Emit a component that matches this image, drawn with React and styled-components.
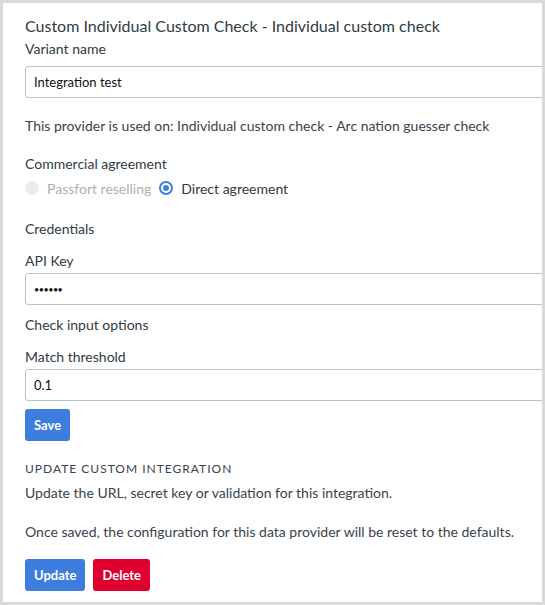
import React from "react";
import styled, { createGlobalStyle } from "styled-components";

const GlobalStyle = createGlobalStyle`
  html, body {
    margin: 0;
    padding: 0;
    background: #d9d9d9;
  }
  * {
    box-sizing: border-box;
  }
`;

const Frame = styled.div`
  width: 545px;
  height: 605px;
  padding: 3px;
  background: #d9d9d9;
`;

const Card = styled.div`
  width: 539px;
  height: 599px;
  background: #fff;
  overflow: hidden;
  padding: 13px 0 0 22px;
  font-family: Lato, "Liberation Sans", sans-serif;
  color: #38434d;
`;

const Title = styled.h1`
  margin: 0;
  font-size: 16px;
  line-height: 20px;
  font-weight: 400;
  color: #2f3b45;
`;

const Label = styled.div`
  margin-top: ${({ gap }) => gap}px;
  font-size: 14px;
  line-height: 20px;
  font-weight: 400;
  color: #2f3b45;
`;

const Input = styled.input`
  display: block;
  width: 580px;
  height: 32px;
  margin-top: ${({ gap }) => gap}px;
  padding: 0 8px;
  border: 1px solid #b7c2ca;
  border-radius: 3px;
  font-family: Lato, "Liberation Sans", sans-serif;
  font-size: ${({ masked }) => (masked ? "9px" : "13px")};
  letter-spacing: ${({ masked }) => (masked ? "-0.5px" : "0")};
  color: #111;
  background: #fff;
  outline: none;
`;

const Text = styled.p`
  margin: ${({ gap }) => gap}px 0 0;
  font-size: 14px;
  line-height: 20px;
  color: #38434d;
`;

const RadioRow = styled.div`
  display: flex;
  align-items: center;
  height: 20px;
  margin-top: 4px;
  font-size: 14px;
`;

const RadioOption = styled.label`
  display: flex;
  align-items: center;
  gap: 8px;
  margin-right: 8px;
  color: ${({ disabled }) => (disabled ? "#a9b0b6" : "#2f3b45")};
`;

const RadioDot = styled.span`
  width: 14px;
  height: 14px;
  border-radius: 50%;
  flex-shrink: 0;
  background: ${({ checked }) => (checked ? "#fff" : "#e9eef3")};
  border: ${({ checked }) => (checked ? "2px solid #3d7fde" : "none")};
  display: flex;
  align-items: center;
  justify-content: center;
  &::after {
    content: "";
    display: ${({ checked }) => (checked ? "block" : "none")};
    width: 6px;
    height: 6px;
    border-radius: 50%;
    background: #3d7fde;
  }
`;

const Heading = styled.div`
  margin-top: 18px;
  font-size: 12px;
  line-height: 20px;
  letter-spacing: 1px;
  text-transform: uppercase;
  color: #38434d;
`;

const Buttons = styled.div`
  display: flex;
  gap: 8px;
  margin-top: ${({ gap }) => gap}px;
`;

const Button = styled.button`
  height: 32px;
  padding: 0 9px;
  border: none;
  border-radius: 3px;
  font-family: Lato, "Liberation Sans", sans-serif;
  font-size: 13px;
  font-weight: 700;
  color: #fff;
  background: ${({ danger }) => (danger ? "#e0002f" : "#3d7ddd")};
  cursor: pointer;
`;

const App = () => (
  <Frame>
    <GlobalStyle />
    <Card>
      <Title>Custom Individual Custom Check - Individual custom check</Title>
      <Label gap={3}>Variant name</Label>
      <Input gap={7} defaultValue="Integration test" />
      <Text gap={18}>
        This provider is used on: Individual custom check - Arc nation guesser
        check
      </Text>
      <Label gap={18}>Commercial agreement</Label>
      <RadioRow>
        <RadioOption disabled>
          <RadioDot />
          Passfort reselling
        </RadioOption>
        <RadioOption>
          <RadioDot checked />
          Direct agreement
        </RadioOption>
      </RadioRow>
      <Label gap={21}>Credentials</Label>
      <Label gap={12}>API Key</Label>
      <Input gap={2} masked defaultValue="••••••" />
      <Label gap={10}>Check input options</Label>
      <Label gap={12}>Match threshold</Label>
      <Input gap={2} defaultValue="0.1" />
      <Buttons gap={8}>
        <Button>Save</Button>
      </Buttons>
      <Heading>Update custom integration</Heading>
      <Text gap={4}>Update the URL, secret key or validation for this integration.</Text>
      <Text gap={19}>
        Once saved, the configuration for this data provider will be reset to the
        defaults.
      </Text>
      <Buttons gap={17}>
        <Button>Update</Button>
        <Button danger>Delete</Button>
      </Buttons>
    </Card>
  </Frame>
);

export default App;
